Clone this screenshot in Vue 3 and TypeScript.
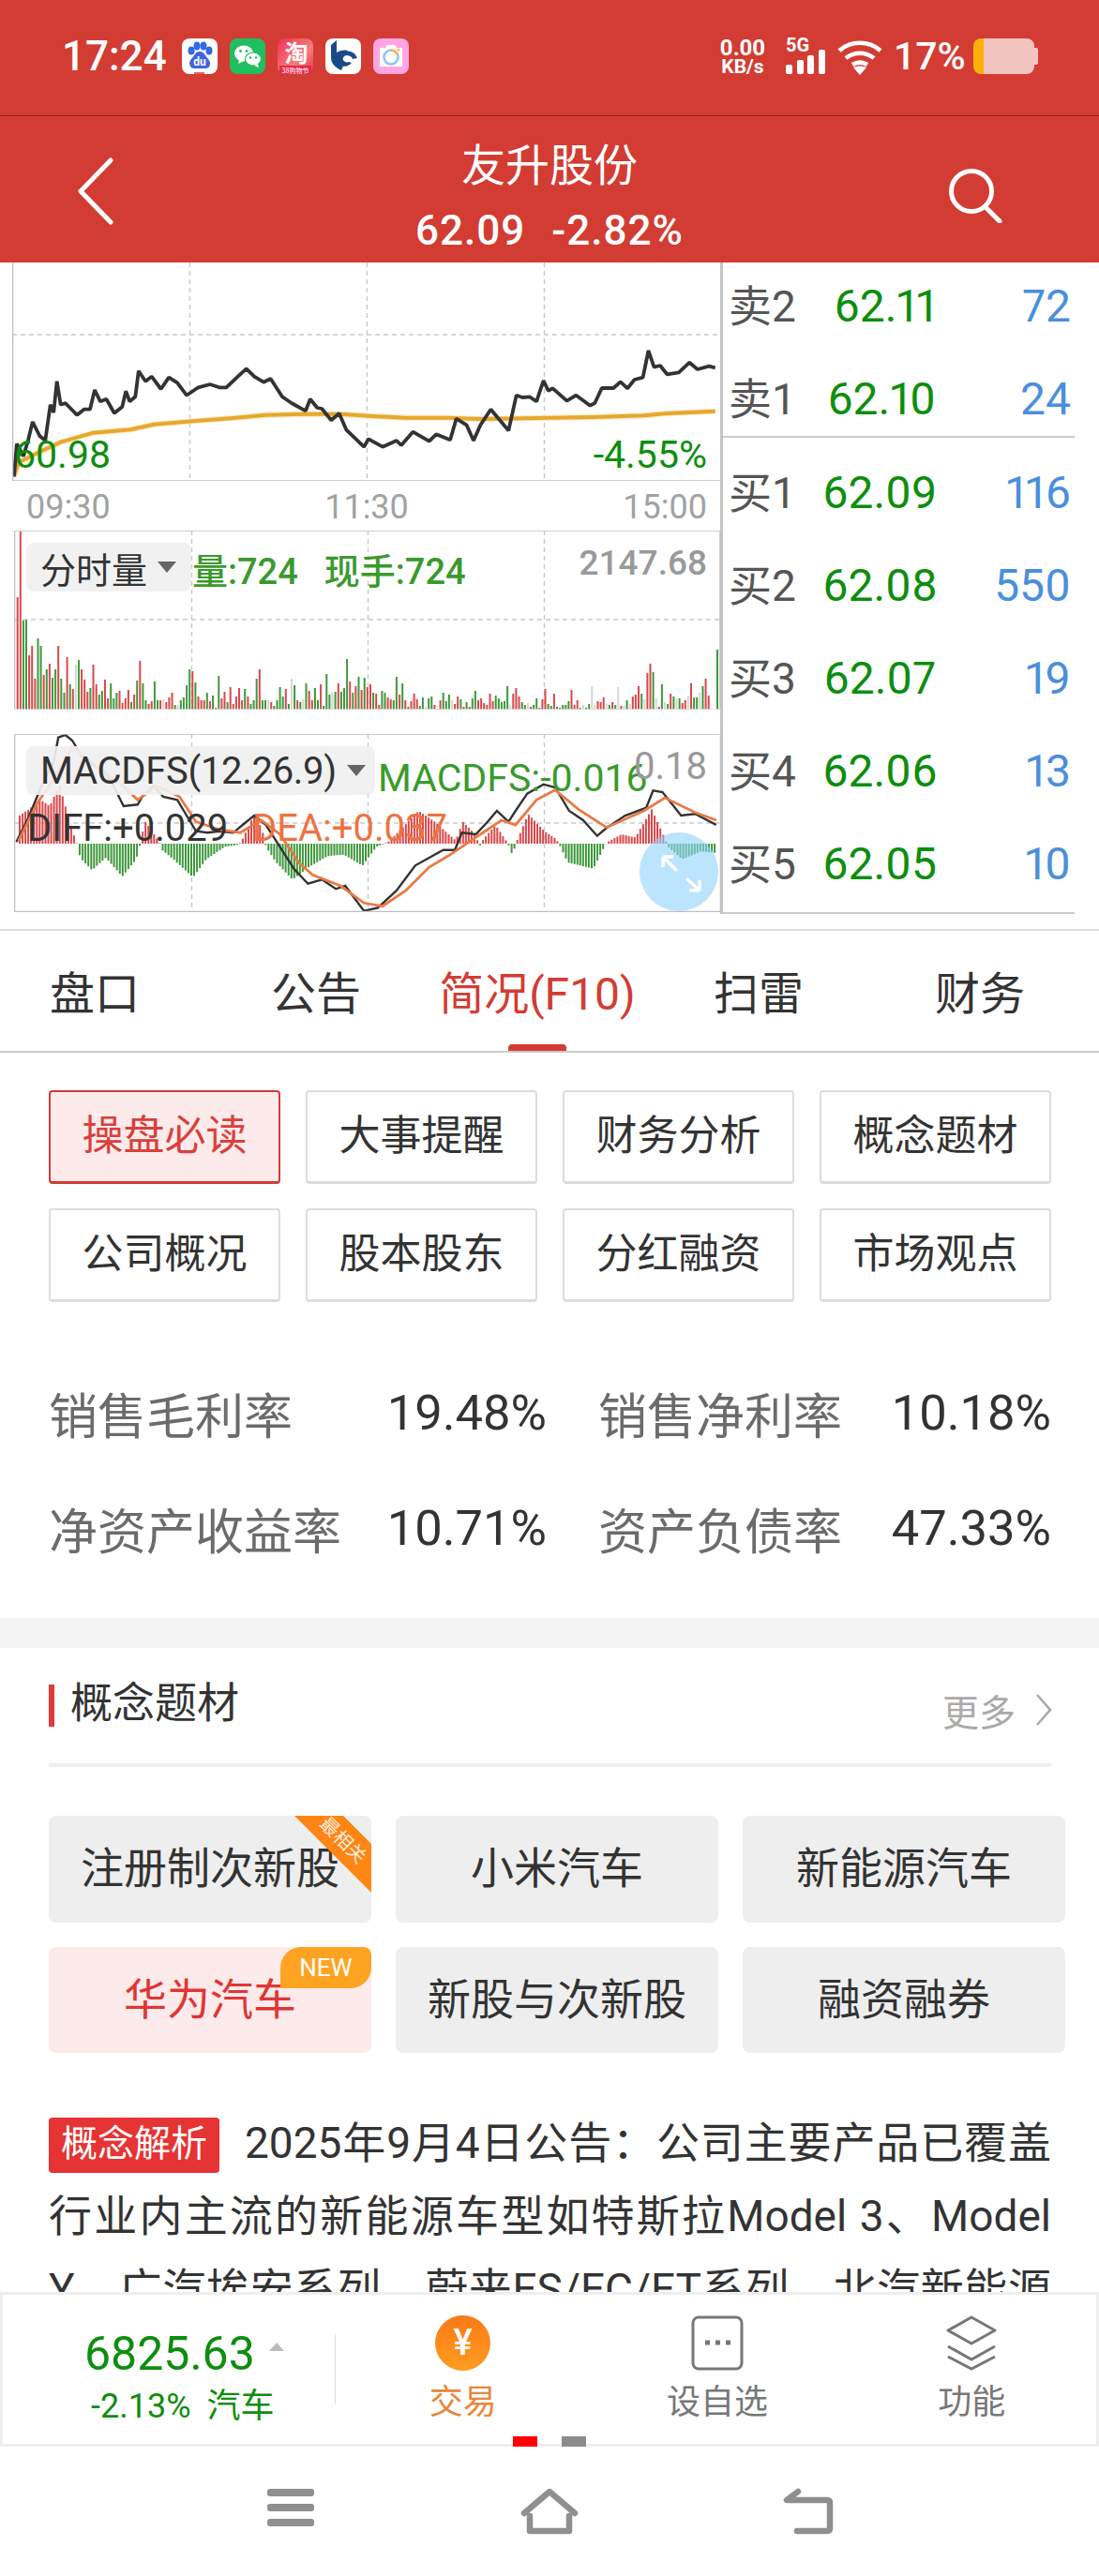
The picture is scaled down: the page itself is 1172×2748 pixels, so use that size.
<template>
  <div class="page">
    <div class="scroll">
      <div class="statusbar">
        <span class="clock">17:24</span>
        <div class="notif">
          <svg width="38" height="38" viewBox="0 0 38 38">
            <rect width="38" height="38" rx="8" fill="#fff" />
            <ellipse cx="10" cy="13" rx="3.5" ry="4.5" fill="#2f6be4" />
            <ellipse cx="16" cy="8" rx="3.5" ry="4.5" fill="#2f6be4" />
            <ellipse cx="23" cy="8" rx="3.5" ry="4.5" fill="#2f6be4" />
            <ellipse cx="29" cy="13" rx="3.5" ry="4.5" fill="#2f6be4" />
            <path d="M19 14c-5 0-6 5-9 8-4 4-1 11 4 10h10c6 1 8-6 4-10-3-3-4-8-9-8z" fill="#3f63dd" />
            <text x="19" y="29" text-anchor="middle" class="du">du</text>
            <rect x="13" y="36" width="11" height="2" fill="#e6635a" />
          </svg>
          <svg width="38" height="38" viewBox="0 0 38 38">
            <rect width="38" height="38" rx="8" fill="#1fbf5f" />
            <ellipse cx="15" cy="16" rx="10" ry="8.5" fill="#fff" />
            <path d="M10 22l-1 5 6-3z" fill="#fff" />
            <ellipse cx="25" cy="22" rx="8.5" ry="7" fill="#fff" stroke="#1fbf5f" stroke-width="1.2" />
            <path d="M30 27l1 4-5-2z" fill="#fff" />
            <circle cx="11.5" cy="13.5" r="1.4" fill="#1fbf5f" />
            <circle cx="18" cy="13.5" r="1.4" fill="#1fbf5f" />
            <circle cx="22" cy="20.5" r="1.2" fill="#1fbf5f" />
            <circle cx="28" cy="20.5" r="1.2" fill="#1fbf5f" />
          </svg>
          <svg width="38" height="38" viewBox="0 0 38 38">
            <defs>
              <linearGradient id="tb" x1="0" y1="0" x2="1" y2="1">
                <stop offset="0" stop-color="#ee2f55" />
                <stop offset="0.6" stop-color="#f77d7a" />
                <stop offset="1" stop-color="#e8304e" />
              </linearGradient>
            </defs>
            <rect width="38" height="38" rx="8" fill="url(#tb)" />
            <text x="20" y="25" text-anchor="middle" class="tao">淘</text>
            <rect x="2" y="29" width="34" height="9" fill="#e42a4c" />
            <text x="19" y="36.5" text-anchor="middle" class="tao-sub">38购物节</text>
          </svg>
          <svg width="38" height="38" viewBox="0 0 38 38">
            <rect width="38" height="38" rx="8" fill="#fff" />
            <path d="M6 7l6-5v13c3-2 8-3 12-2l-4 5c-3 0-4 2-4 4s1 4 4 5l-3 7c-5-2-11-7-11-13z" fill="#1a4a8a" />
            <path d="M20 14c6-2 12 1 14 7l-5 1c-1-3-4-4-6-4-3 0-5 3-4 5s4 3 6 2l3 1c-3 4-9 5-12 2s-3-11 4-14z" fill="#1a4a8a" />
          </svg>
          <svg width="38" height="38" viewBox="0 0 38 38">
            <rect width="38" height="38" rx="8" fill="#ffa6e2" />
            <path d="M7 10h6l2-3h8l2 3h6v20H7z" fill="#fff" />
            <circle cx="19" cy="20" r="7.5" fill="none" stroke="#8cc6f0" stroke-width="2.6" />
            <path d="M19 12.5a7.5 7.5 0 0 1 7 5" fill="none" stroke="#f7b45a" stroke-width="2.6" />
            <circle cx="27" cy="12" r="1.5" fill="#f7b45a" />
          </svg>
        </div>
        <div class="sys">
          <div class="speed"><span>0.00</span><span class="unit">KB/s</span></div>
          <div class="net">
            <span>5G</span>
            <svg width="42" height="26" viewBox="0 0 42 26">
              <rect x="0" y="16" width="7" height="10" rx="2" fill="#fff" />
              <rect x="12" y="11" width="7" height="15" rx="2" fill="#fff" />
              <rect x="23" y="6" width="7" height="20" rx="2" fill="#fff" />
              <rect x="35" y="0" width="7" height="26" rx="2" fill="#fff" />
            </svg>
          </div>
          <svg class="wifi" width="48" height="39" viewBox="0 0 48 39" fill="none" stroke="#fff" stroke-width="4.6">
            <path d="M2 13c12-11 32-11 44 0" />
            <path d="M9 21c9-7 21-7 30 0" />
            <path d="M16 28c5-3 11-3 16 0" />
            <path d="M17 31l7 8 7-8c-4-2-10-2-14 0z" fill="#fff" stroke="none" />
          </svg>
          <span class="pct">17%</span>
          <svg width="69" height="38" viewBox="0 0 69 38">
            <path d="M11 0h46a8 8 0 0 1 8 8v2h2a2 2 0 0 1 2 2v14a2 2 0 0 1-2 2h-2v2a8 8 0 0 1-8 8H11z" fill="#f2c4c0" />
            <path d="M11 0H8a8 8 0 0 0-8 8v22a8 8 0 0 0 8 8h3z" fill="#ffb10a" />
          </svg>
        </div>
      </div>

      <header class="topbar">
        <svg class="back" width="40" height="72" viewBox="0 0 40 72" fill="none" stroke="#fff" stroke-width="5" stroke-linecap="round" stroke-linejoin="round">
          <path d="M36 3L4 36l32 33" />
        </svg>
        <div class="title">
          <div class="name">友升股份</div>
          <div class="quote-line"><span>62.09</span><span>-2.82%</span></div>
        </div>
        <svg class="search" width="60" height="60" viewBox="0 0 60 60" fill="none" stroke="#fff" stroke-width="5" stroke-linecap="round">
          <circle cx="26" cy="26" r="21.5" />
          <path d="M42 44l14 14" />
        </svg>
      </header>

      <section class="market">
        <div class="charts">
          <div class="price-panel">
            <svg width="756" height="233" viewBox="13 280 756 233">
              <path d="M202.5 280V513M391.5 280V513M580.5 280V513M13 357H769" class="grid" />
              <polyline :points="avgLine" class="avg-glow" />
              <polyline :points="avgLine" class="avg" />
              <polyline :points="priceLine" class="price" />
              <path d="M13.5 280V513H769" class="frame" />
            </svg>
            <span class="low">60.98</span>
            <span class="low-pct">-4.55%</span>
          </div>
          <div class="axis"><span>09:30</span><span>11:30</span><span>15:00</span></div>

          <div class="vol-panel">
            <svg width="754" height="191" viewBox="15 566 754 191">
              <path d="M204.5 566V757M392.5 566V757M580.5 566V757M15 661H769" class="grid" />
              <rect
                v-for="(b, i) in volBars"
                :key="i"
                :x="b.x"
                :y="757 - b.h"
                width="2"
                :height="b.h"
                :fill="b.color"
              />
              <path d="M768 757V566H15.5V757" class="frame" />
              <path d="M15 757H769" class="frame-soft" />
            </svg>
            <div class="pick vol-pick">分时量<i class="tri"></i></div>
            <div class="legend vol-legend"><span>量:724</span><span>现手:724</span></div>
            <span class="max">2147.68</span>
          </div>

          <div class="macd-panel">
            <svg width="754" height="190" viewBox="15 783 754 190">
              <path d="M204.5 783V973M392.5 783V973M580.5 783V973M15 878H769" class="grid" />
              <rect
                v-for="(b, i) in macdBars"
                :key="i"
                :x="b.x"
                :y="b.y"
                width="2"
                :height="b.h"
                :fill="b.color"
              />
              <polyline :points="diffLine" class="diff" />
              <polyline :points="deaLine" class="dea" />
              <path d="M15.5 783H768.5V972.5H15.5z" class="frame" />
            </svg>
            <div class="pick macd-pick">MACDFS(12.26.9)<i class="tri"></i></div>
            <span class="legend macd-val">MACDFS:-0.016</span>
            <span class="max macd-max">0.18</span>
            <span class="diff-val">DIFF:+0.029</span>
            <span class="dea-val">DEA:+0.037</span>
            <svg class="expand" width="84" height="84" viewBox="0 0 84 84">
              <circle cx="42" cy="42" r="42" fill="#8fd2fb" fill-opacity="0.6" />
              <path d="M25 26l15 15M25 26v11M25 26h11M64 62L50 49M64 62V51M64 62H53" fill="none" stroke="#fff" stroke-width="3.5" />
            </svg>
          </div>
        </div>

        <div class="orderbook">
          <div class="asks">
            <div v-for="r in asks" :key="r.label" class="ob-row">
              <span class="ob-label">{{ r.label }}</span>
              <span class="ob-price">{{ r.price }}</span>
              <span class="ob-qty">{{ r.qty }}</span>
            </div>
          </div>
          <div class="bids">
            <div v-for="r in bids" :key="r.label" class="ob-row">
              <span class="ob-label">{{ r.label }}</span>
              <span class="ob-price">{{ r.price }}</span>
              <span class="ob-qty">{{ r.qty }}</span>
            </div>
          </div>
        </div>
      </section>

      <nav class="tabs">
        <div v-for="t in tabs" :key="t" class="tab" :class="{ on: t === '简况(F10)' }">{{ t }}</div>
      </nav>

      <div class="btn-grid">
        <div v-for="b in buttons" :key="b" class="btn" :class="{ on: b === '操盘必读' }">{{ b }}</div>
      </div>

      <div class="stats">
        <div v-for="s in stats" :key="s.label" class="stat">
          <span class="stat-label">{{ s.label }}</span>
          <span class="stat-val">{{ s.value }}</span>
        </div>
      </div>

      <div class="band"></div>

      <div class="sec-head">
        <div class="sec-title">概念题材</div>
        <div class="more">
          更多
          <svg width="20" height="36" viewBox="0 0 20 36" fill="none" stroke="#aaa" stroke-width="2.6">
            <path d="M3 2l14 16L3 34" />
          </svg>
        </div>
      </div>

      <div class="tags">
        <div v-for="t in tags" :key="t" class="tag" :class="{ on: t === '华为汽车' }">
          {{ t }}
          <div v-if="t === '注册制次新股'" class="ribbon"><span>最相关</span></div>
          <div v-if="t === '华为汽车'" class="new">NEW</div>
        </div>
      </div>

      <p class="desc">
        <span class="desc-tag">概念解析</span>2025年9月4日公告：公司主要产品已覆盖行业内主流的新能源车型如特斯拉Model 3、Model Y、广汽埃安系列、蔚来ES/EC/ET系列、北汽新能源极狐系列等，公司与多家主流车企建立了长期稳定的合作关系。
      </p>
    </div>

    <div class="dock">
      <div class="idx">
        <div class="idx-top">6825.63<i class="up"></i></div>
        <div class="idx-sub"><span>-2.13%</span><span>汽车</span></div>
      </div>
      <div class="idx-sep"></div>
      <div class="actions">
        <div class="act trade">
          <div class="coin">¥</div>
          <span>交易</span>
        </div>
        <div class="act">
          <svg width="56" height="59" viewBox="0 0 56 59" fill="none" stroke="#777" stroke-width="3">
            <rect x="2" y="2" width="52" height="55" rx="6" />
            <path d="M15 29h5M26 29h5M37 29h5" stroke-width="5" />
          </svg>
          <span>设自选</span>
        </div>
        <div class="act">
          <svg width="56" height="59" viewBox="0 0 56 59" fill="none" stroke="#777" stroke-width="3">
            <path d="M28 2l25 14-25 14L3 16z" stroke-linejoin="round" />
            <path d="M3 33l25 14 25-14" />
            <path d="M3 44l25 13 25-13" />
          </svg>
          <span>功能</span>
        </div>
      </div>
      <i class="dot red"></i>
      <i class="dot grey"></i>
    </div>

    <div class="sysnav">
      <svg width="50" height="42" viewBox="0 0 50 42" fill="#8f8f8f">
        <rect y="1" width="50" height="8" rx="3" />
        <rect y="17" width="50" height="8" rx="3" />
        <rect y="33" width="50" height="8" rx="3" />
      </svg>
      <svg width="62" height="50" viewBox="0 0 62 50" fill="none" stroke="#8f8f8f" stroke-width="6.5" stroke-linecap="round" stroke-linejoin="round">
        <path d="M4 27L31 4l27 23" />
        <path d="M10 30v16h42V30" />
      </svg>
      <svg width="56" height="50" viewBox="0 0 56 50" fill="none" stroke="#8f8f8f" stroke-width="6.5" stroke-linecap="round" stroke-linejoin="round">
        <path d="M17 4L5 13h43q3 0 3 3v27q0 3-3 3H16" />
      </svg>
    </div>
  </div>
</template>

<script setup lang="ts">
// chart coordinates were read off a crop scaled 2.01x horizontally and 3x vertically
const toPoints = (raw: number[], top: number) => {
  const out: string[] = []
  for (let i = 0; i < raw.length; i += 2) {
    out.push(`${(raw[i] / 2.01).toFixed(1)},${(top + raw[i + 1] / 3).toFixed(1)}`)
  }
  return out.join(' ')
}

const priceLine = toPoints(
  [
    30, 685, 36, 580, 50, 620, 60, 570, 70, 510, 85, 555, 97, 570, 108, 455, 115, 480, 122, 380,
    130, 455, 140, 450, 150, 465, 165, 488, 180, 470, 193, 470, 203, 408, 215, 445, 228, 437,
    245, 482, 262, 462, 270, 412, 278, 445, 290, 430, 297, 347, 312, 380, 325, 365, 345, 405,
    362, 368, 380, 385, 400, 425, 425, 400, 450, 390, 470, 400, 485, 400, 510, 365, 528, 340,
    545, 365, 565, 383, 580, 372, 605, 430, 625, 450, 655, 475, 665, 437, 680, 465, 690, 468,
    710, 505, 727, 483, 742, 535, 780, 590, 790, 565, 820, 590, 850, 570, 860, 585, 885, 542,
    920, 572, 935, 550, 965, 568, 978, 500, 1000, 520, 1015, 570, 1030, 520, 1052, 470, 1090, 538,
    1107, 425, 1120, 432, 1135, 430, 1150, 445, 1165, 378, 1175, 410, 1185, 403, 1215, 443,
    1235, 425, 1265, 458, 1275, 450, 1290, 402, 1315, 402, 1330, 382, 1345, 403, 1360, 375,
    1378, 368, 1390, 282, 1402, 335, 1415, 330, 1430, 358, 1455, 352, 1478, 320, 1495, 342,
    1520, 332, 1533, 337,
  ],
  280,
)

const avgLine = toPoints(
  [
    30, 685, 40, 640, 80, 610, 130, 575, 200, 545, 280, 535, 330, 518, 420, 507, 500, 498, 570, 488,
    650, 485, 730, 485, 800, 492, 870, 497, 960, 497, 1030, 501, 1150, 498, 1270, 495, 1380, 490,
    1430, 483, 1533, 476,
  ],
  280,
)

const diffLine = toPoints(
  [
    35, 1015, 60, 940, 85, 850, 100, 800, 115, 760, 125, 680, 140, 672, 155, 690, 175, 740, 200, 770,
    225, 790, 245, 840, 265, 900, 295, 895, 305, 870, 330, 835, 350, 870, 380, 880, 400, 930, 420, 980,
    445, 985, 470, 980, 500, 985, 520, 960, 545, 930, 570, 960, 600, 1030, 630, 1100, 660, 1148,
    690, 1135, 720, 1165, 740, 1155, 780, 1235, 810, 1225, 850, 1170, 890, 1090, 920, 1065, 950, 1040,
    975, 1040, 990, 985, 1020, 990, 1045, 950, 1065, 915, 1090, 950, 1105, 915, 1130, 860, 1165, 830,
    1190, 840, 1220, 915, 1250, 945, 1280, 995, 1300, 970, 1340, 930, 1385, 905, 1400, 850, 1420, 855,
    1460, 930, 1490, 925, 1535, 960,
  ],
  560,
)

const deaLine = toPoints(
  [
    40, 1010, 80, 890, 125, 790, 155, 712, 185, 745, 215, 785, 260, 830, 295, 880, 335, 835, 385, 870,
    420, 950, 470, 975, 515, 985, 560, 945, 600, 990, 640, 1080, 670, 1120, 730, 1155, 780, 1210,
    820, 1220, 870, 1170, 920, 1095, 960, 1060, 990, 1030, 1030, 990, 1075, 945, 1105, 960, 1150, 880,
    1190, 848, 1240, 910, 1300, 968, 1380, 915, 1425, 873, 1490, 920, 1535, 945,
  ],
  560,
)

const colors: Record<string, string> = { r: '#d9484a', g: '#3f983c', n: '#d6d6d6' }

const volRaw =
  'r120 r190 g95 g96 r58 r68 r33 g76 g68 r37 g43 r49 g34 g43 r68 g33 g18 r56 g27 r22 n48 g53 r43 r32 r19 g23 r48 r27 g16 g20 r32 r12 g28 g12 g18 r20 r7 r12 r21 g8 r16 g31 r52 g28 g10 r6 r9 g30 g10 r10 n11 r8 r13 r18 g5 n5 g10 g13 g26 g43 r41 g29 r14 r10 r10 g18 r9 g15 r2 g36 r12 r19 g8 r24 r6 r14 r23 r10 g22 r14 g6 g10 g33 r43 g10 g10 n10 r8 g4 g10 g24 g14 r22 g6 n33 g26 r10 g8 n11 g28 r20 r10 g23 g10 r27 g4 g38 g16 n18 g19 r28 g19 g23 g54 r30 g18 r25 g35 r21 g34 ' +
  'r24 r27 g18 r17 r5 g20 g18 r13 r11 g10 g35 r16 g28 r10 g3 r9 r17 r11 g4 g13 n3 g12 g14 r5 r1 r10 g18 g9 g16 n10 r6 r14 g11 r3 g8 r3 g12 g20 r10 r12 r7 r5 r17 r9 g15 g12 g8 g9 g25 n5 r17 r23 r14 g8 g5 n7 r3 g5 g12 r2 r11 r22 g6 g4 r17 g3 g2 g5 g5 g9 r21 r5 r10 g2 n5 g2 g6 n25 n5 r9 r8 r13 n6 g5 r8 g5 n24 r4 n4 g10 n6 r14 r16 r25 g17 n11 r39 r49 g40 n12 r3 g27 n8 g6 r17 g14 n12 g12 r7 r10 n15 r28 g13 g13 n18 g25 r33 r15 n1 n0 g64'

const volItems = volRaw.split(' ')
const volBars = volItems.map((s, i) => ({
  x: +(17.7 + (i * (764 - 17.7)) / (volItems.length - 1)).toFixed(1),
  h: +s.slice(1),
  color: colors[s[0]],
}))

// histogram outline: [x in the crop, height above the zero line in the crop]
const macdShape: [number, number][] = [
  [40, 90], [60, 110], [85, 140], [105, 120], [125, 190], [140, 110], [160, 10], [165, -5], [170, -45],
  [195, -85], [225, -45], [260, -105], [290, -50], [298, -5], [300, 20], [310, 70], [340, 5], [345, -20],
  [370, -50], [412, -108], [440, -50], [480, -10], [505, -5], [515, 5], [545, 100], [565, 20], [568, -10],
  [590, -60], [625, -115], [660, -75], [700, -40], [735, -35], [775, -70], [805, -10], [830, 5], [860, 50],
  [895, 105], [930, 70], [975, 10], [990, 70], [1010, 40], [1025, 1], [1026, -10], [1030, 5], [1035, 15],
  [1060, 60], [1085, 5], [1090, -10], [1097, -40], [1103, -1], [1105, 5], [1130, 95], [1165, 40],
  [1190, 15], [1198, -5], [1215, -60], [1270, -80], [1295, -5], [1300, 5], [1330, 30], [1360, 20],
  [1395, 110], [1425, 10], [1430, -10], [1460, -50], [1500, -25], [1540, -30],
]

const shapeAt = (x: number) => {
  for (let i = 1; i < macdShape.length; i++) {
    const [x0, y0] = macdShape[i - 1]
    const [x1, y1] = macdShape[i]
    if (x <= x1) return y0 + ((y1 - y0) * (x - x0)) / (x1 - x0)
  }
  return 0
}

const macdBars = Array.from({ length: 244 }, (_, i) => {
  const x = 20 + i * 3.05
  const v = shapeAt(x * 2.01) / 3
  const h = Math.abs(v)
  return {
    x: +x.toFixed(1),
    y: +(v > 0 ? 900 - h : 900).toFixed(1),
    h: +h.toFixed(1),
    color: v > 0 ? '#d9484a' : '#3f983c',
  }
})

const asks = [
  { label: '卖2', price: '62.11', qty: '72' },
  { label: '卖1', price: '62.10', qty: '24' },
]

const bids = [
  { label: '买1', price: '62.09', qty: '116' },
  { label: '买2', price: '62.08', qty: '550' },
  { label: '买3', price: '62.07', qty: '19' },
  { label: '买4', price: '62.06', qty: '13' },
  { label: '买5', price: '62.05', qty: '10' },
]

const tabs = ['盘口', '公告', '简况(F10)', '扫雷', '财务']

const buttons = ['操盘必读', '大事提醒', '财务分析', '概念题材', '公司概况', '股本股东', '分红融资', '市场观点']

const stats = [
  { label: '销售毛利率', value: '19.48%' },
  { label: '销售净利率', value: '10.18%' },
  { label: '净资产收益率', value: '10.71%' },
  { label: '资产负债率', value: '47.33%' },
]

const tags = ['注册制次新股', '小米汽车', '新能源汽车', '华为汽车', '新股与次新股', '融资融券']
</script>

<style>
html,
body {
  margin: 0;
  background: #fff;
}
</style>

<style scoped>
.page {
  width: 1172px;
  height: 2748px;
  display: flex;
  flex-direction: column;
  overflow: hidden;
  background: #fff;
  font-family: Roboto, 'Noto Sans CJK SC', sans-serif;
  color: #333;
}

.scroll {
  flex: 1;
  min-height: 0;
  overflow: hidden;
}

.statusbar {
  height: 124px;
  box-sizing: border-box;
  padding: 41px 65px 0 66px;
  display: flex;
  align-items: flex-start;
  background: #d33c33;
  border-bottom: 1px solid #8e1f1a;
  color: #fff;
}

.clock {
  font-size: 44px;
  font-weight: 500;
  line-height: 38px;
  margin-right: 16px;
}

.notif {
  display: flex;
  gap: 13px;
}

.du {
  font: 700 12px Roboto, sans-serif;
  fill: #fff;
}

.tao {
  font: 700 25px 'Noto Sans CJK SC', sans-serif;
  fill: #fff;
}

.tao-sub {
  font: 400 7px 'Noto Sans CJK SC', sans-serif;
  fill: #fff;
}

.sys {
  margin-left: auto;
  display: flex;
  align-items: flex-start;
}

.speed {
  width: 48px;
  display: flex;
  flex-direction: column;
  align-items: center;
  margin-top: -1px;
  font-size: 24px;
  font-weight: 700;
  line-height: 22px;
}

.unit {
  font-size: 21px;
  margin-top: -2px;
}

.net {
  width: 42px;
  margin-left: 22px;
  font-size: 20px;
  font-weight: 700;
  line-height: 14px;
  position: relative;
  height: 38px;
}

.net svg {
  position: absolute;
  left: 0;
  bottom: 0;
}

.wifi {
  margin-left: 13px;
}

.pct {
  margin-left: 12px;
  width: 85px;
  font-size: 41px;
  font-weight: 500;
  line-height: 38px;
}

.topbar {
  height: 156px;
  box-sizing: border-box;
  display: grid;
  grid-template-columns: 1fr auto 1fr;
  align-items: center;
  background: #d33c33;
  color: #fff;
}

.back {
  margin-left: 82px;
  margin-top: 4px;
}

.search {
  justify-self: end;
  margin-right: 102px;
  margin-top: 12px;
}

.title {
  text-align: center;
  margin-top: 18px;
}

.name {
  font-size: 47px;
  line-height: 60px;
}

.quote-line {
  display: flex;
  justify-content: center;
  gap: 28px;
  margin-top: 9px;
  font-size: 44px;
  font-weight: 500;
  line-height: 60px;
  letter-spacing: 1px;
}

.market {
  display: flex;
  align-items: flex-start;
  height: 713px;
  box-sizing: border-box;
  border-bottom: 2px solid #ddd;
}

.charts {
  width: 768px;
  flex: none;
}

svg {
  display: block;
  flex: none;
}

.grid {
  fill: none;
  stroke: #c9c9c9;
  stroke-width: 1.4;
  stroke-dasharray: 5 4;
}

.frame {
  fill: none;
  stroke: #c0c0c0;
  stroke-width: 1.6;
}

.frame-soft {
  fill: none;
  stroke: #ddd;
  stroke-width: 1.4;
}

.price {
  fill: none;
  stroke: #333;
  stroke-width: 3.8;
  stroke-linejoin: bevel;
}

.avg {
  fill: none;
  stroke: #e8a72e;
  stroke-width: 4;
}

.avg-glow {
  fill: none;
  stroke: #fbe7b8;
  stroke-width: 6;
}

.diff {
  fill: none;
  stroke: #333;
  stroke-width: 2.4;
}

.dea {
  fill: none;
  stroke: #ea7a45;
  stroke-width: 2.8;
}

.price-panel {
  position: relative;
  margin-left: 13px;
  width: 756px;
  height: 233px;
}

.low,
.low-pct {
  position: absolute;
  top: 180px;
  font-size: 41px;
  line-height: 50px;
  color: #0d8e0d;
}

.low {
  left: 2px;
}

.low-pct {
  right: 15px;
}

.axis {
  height: 53px;
  box-sizing: border-box;
  padding: 3px 14px 0 28px;
  display: flex;
  justify-content: space-between;
  align-items: center;
  font-size: 36px;
  color: #a2a2a2;
}

.vol-panel,
.macd-panel {
  position: relative;
  margin-left: 15px;
  width: 754px;
}

.vol-panel {
  height: 191px;
}

.macd-panel {
  height: 190px;
  margin-top: 26px;
}

.pick {
  position: absolute;
  top: 13px;
  left: 13px;
  height: 52px;
  box-sizing: border-box;
  padding: 0 0 0 15px;
  display: flex;
  align-items: center;
  background: rgba(240, 240, 240, 0.92);
  border-radius: 8px;
  font-size: 40px;
  white-space: nowrap;
  color: #333;
}

.vol-pick {
  width: 176px;
  font-size: 38px;
}

.macd-pick {
  width: 372px;
  letter-spacing: -0.3px;
}

.tri {
  margin-left: 11px;
  width: 0;
  height: 0;
  border-left: 10px solid transparent;
  border-right: 10px solid transparent;
  border-top: 12px solid #666;
}

.legend {
  position: absolute;
  font-size: 38px;
  line-height: 50px;
  font-weight: 500;
  color: #3a9a2c;
  white-space: nowrap;
}

.vol-legend {
  top: 19px;
  left: 190px;
  display: flex;
  gap: 28px;
}

.macd-val {
  top: 22px;
  left: 388px;
  font-size: 41px;
  font-weight: 400;
}

.max {
  position: absolute;
  top: 10px;
  right: 15px;
  font-size: 37px;
  line-height: 50px;
  font-weight: 500;
  color: #999;
}

.macd-max {
  top: 10px;
  font-weight: 400;
  font-size: 40px;
}

.diff-val,
.dea-val {
  position: absolute;
  top: 76px;
  font-size: 40px;
  line-height: 50px;
  white-space: nowrap;
}

.diff-val {
  left: 14px;
  color: #333;
}

.dea-val {
  left: 254px;
  color: #ee7340;
}

.expand {
  position: absolute;
  left: 667px;
  top: 105px;
}

.orderbook {
  width: 375px;
  flex: none;
  border-left: 3px solid #c4c4c4;
  box-sizing: content-box;
}

.asks {
  height: 185px;
  padding-top: 9px;
  box-sizing: border-box;
  display: flex;
  flex-direction: column;
  gap: 23px;
  border-bottom: 2px solid #ccc;
  height: 187px;
}

.bids {
  padding: 21px 0 13px;
  border-bottom: 2px solid #ccc;
  display: flex;
  flex-direction: column;
  gap: 23px;
}

.ob-row {
  display: grid;
  grid-template-columns: 100px 121px 144px;
  padding-left: 6px;
  line-height: 76px;
  height: 76px;
  flex: none;
}

.ob-label {
  font-size: 46px;
  color: #555;
}

.ob-price {
  font-size: 48px;
  color: #0d8e0d;
  text-align: right;
  font-variant-numeric: proportional-nums;
}

.ob-qty {
  font-size: 48px;
  color: #4a8fdd;
  text-align: right;
  font-variant-numeric: proportional-nums;
}

.tabs {
  display: flex;
  height: 128px;
  margin-left: -17px;
  width: 1189px;
  border-bottom: 2px solid #ccc;
}

.tab {
  position: relative;
  width: 236px;
  height: 128px;
  flex: none;
  text-align: center;
  font-size: 48px;
  line-height: 136px;
  color: #333;
}

.tab.on {
  color: #d33c33;
}

.tab.on::after {
  content: '';
  position: absolute;
  left: 87px;
  bottom: 0;
  width: 62px;
  height: 7px;
  border-radius: 4px 4px 0 0;
  background: #d33c33;
}

.btn-grid {
  display: grid;
  grid-template-columns: repeat(4, 247px);
  column-gap: 27px;
  row-gap: 26px;
  padding: 40px 0 0 52px;
}

.btn {
  height: 100px;
  box-sizing: border-box;
  border: 2px solid #ddd;
  border-bottom-width: 3px;
  border-radius: 4px;
  text-align: center;
  font-size: 44px;
  line-height: 94px;
  color: #333;
}

.btn.on {
  border-color: #cf3c38;
  background: #fdeaea;
  color: #d8403c;
}

.stats {
  display: grid;
  grid-template-columns: 531px 483px;
  column-gap: 55px;
  row-gap: 63px;
  padding: 88px 0 66px 52px;
}

.stat {
  display: flex;
  justify-content: space-between;
  align-items: center;
  height: 60px;
}

.stat-label {
  font-size: 52px;
  color: #6b6b6b;
}

.stat-val {
  font-size: 52.5px;
  color: #333;
}

.band {
  height: 32px;
  background: #f4f4f4;
}

.sec-head {
  margin: 0 51px 0 52px;
  height: 123px;
  border-bottom: 4px solid #eee;
  display: flex;
  justify-content: space-between;
  align-items: center;
}

.sec-title {
  height: 45px;
  border-left: 6px solid #e03a3a;
  padding-left: 17px;
  font-size: 45px;
  line-height: 42px;
  color: #333;
}

.more {
  display: flex;
  align-items: center;
  gap: 20px;
  margin-top: 8px;
  margin-right: -2px;
  font-size: 39px;
  color: #aaa;
}

.tags {
  display: grid;
  grid-template-columns: repeat(3, 344px);
  column-gap: 26px;
  row-gap: 26px;
  padding: 52px 0 0 52px;
}

.tag {
  position: relative;
  height: 113.5px;
  border-radius: 8px;
  background: #eee;
  overflow: hidden;
  text-align: center;
  font-size: 46px;
  line-height: 113px;
  color: #333;
}

.tag.on {
  background: #fdeaea;
  color: #e03535;
}

.ribbon {
  position: absolute;
  top: 0;
  right: 0;
  width: 82px;
  height: 82px;
  background: #ff8515;
  clip-path: polygon(0 0, 52px 0, 82px 30px, 82px 82px);
}

.ribbon span {
  position: absolute;
  left: 19px;
  top: 14px;
  width: 66px;
  text-align: center;
  font-size: 20px;
  line-height: 24px;
  color: #fff;
  transform: rotate(45deg);
  opacity: 0.85;
}

.new {
  position: absolute;
  top: 0;
  right: 0;
  width: 97px;
  height: 44px;
  background: #ffa322;
  border-radius: 22px 8px 22px 0;
  text-align: center;
  font-size: 26px;
  line-height: 44px;
  color: #fff;
}

.desc {
  margin: 57px 51px 0 52px;
  font-size: 46px;
  line-height: 78px;
  text-align: justify;
  color: #333;
}

.desc-tag {
  display: inline-block;
  height: 59px;
  width: 182px;
  margin-right: 27px;
  border-radius: 4px;
  background: #e63333;
  text-align: center;
  font-size: 39px;
  line-height: 56px;
  color: #fff;
  vertical-align: 2px;
}

.dock {
  position: relative;
  height: 165px;
  box-sizing: border-box;
  flex: none;
  display: flex;
  align-items: center;
  border: 3px solid #eee;
  background: #fff;
}

.idx {
  width: 354px;
  box-sizing: border-box;
  padding-left: 87px;
  margin-top: 22px;
}

.idx-top {
  position: relative;
  font-size: 50px;
  line-height: 56px;
  color: #0d8e0d;
}

.up {
  position: absolute;
  left: 197px;
  top: 16px;
  width: 0;
  height: 0;
  border-left: 8px solid transparent;
  border-right: 8px solid transparent;
  border-bottom: 9px solid #bbb;
}

.idx-sub {
  display: flex;
  gap: 17px;
  padding-left: 7px;
  font-size: 36px;
  line-height: 56px;
  color: #0d8e0d;
}

.idx-sep {
  width: 1px;
  height: 75px;
  background: #ddd;
}

.actions {
  flex: 1;
  display: grid;
  grid-template-columns: repeat(3, 1fr);
  margin-right: -3px;
}

.act {
  display: flex;
  flex-direction: column;
  align-items: center;
  gap: 14px;
  margin-top: -2px;
  font-size: 36px;
  line-height: 40px;
  color: #777;
}

.trade {
  color: #e8873a;
}

.coin {
  width: 59px;
  height: 59px;
  border-radius: 50%;
  background: linear-gradient(#f87a16, #ff9c20);
  color: #fff;
  text-align: center;
  font-size: 38px;
  line-height: 58px;
  font-weight: 500;
}

.dot {
  position: absolute;
  bottom: -3px;
  width: 26px;
  height: 11px;
}

.dot.red {
  left: 544px;
  background: #f00;
}

.dot.grey {
  left: 596px;
  background: #8c8c8c;
}

.sysnav {
  height: 138px;
  box-sizing: border-box;
  flex: none;
  display: grid;
  grid-template-columns: repeat(3, 276px);
  justify-content: center;
  justify-items: center;
  align-items: start;
  padding-top: 44px;
}
</style>
